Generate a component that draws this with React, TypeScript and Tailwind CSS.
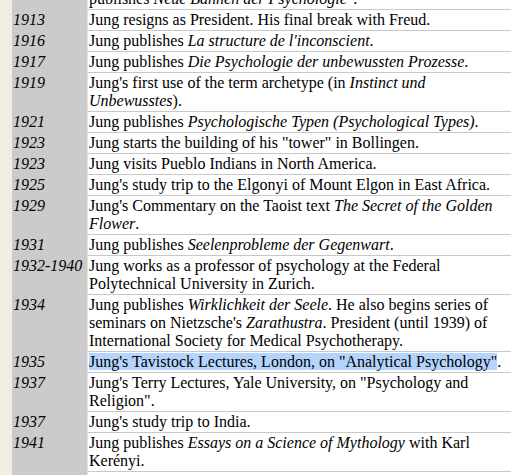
import React from "react";

type Row = { year: string; text: React.ReactNode };

const rows: Row[] = [
  {
    year: "1912",
    text: (
      <>
        Jung publishes <i>Wandlungen und Symbole der Libido</i>. He also
        <br />
        publishes <i>Neue Bahnen der Psychologie</i>".
      </>
    ),
  },
  { year: "1913", text: <>Jung resigns as President. His final break with Freud.</> },
  { year: "1916", text: <>Jung publishes <i>La structure de l'inconscient</i>.</> },
  { year: "1917", text: <>Jung publishes <i>Die Psychologie der unbewussten Prozesse</i>.</> },
  {
    year: "1919",
    text: (
      <>
        Jung's first use of the term archetype (in <i>Instinct und Unbewusstes</i>).
      </>
    ),
  },
  { year: "1921", text: <>Jung publishes <i>Psychologische Typen (Psychological Types)</i>.</> },
  { year: "1923", text: <>Jung starts the building of his "tower" in Bollingen.</> },
  { year: "1923", text: <>Jung visits Pueblo Indians in North America.</> },
  { year: "1925", text: <>Jung's study trip to the Elgonyi of Mount Elgon in East Africa.</> },
  {
    year: "1929",
    text: (
      <>
        Jung's Commentary on the Taoist text <i>The Secret of the Golden Flower</i>.
      </>
    ),
  },
  { year: "1931", text: <>Jung publishes <i>Seelenprobleme der Gegenwart</i>.</> },
  {
    year: "1932-1940",
    text: <>Jung works as a professor of psychology at the Federal Polytechnical University in Zurich.</>,
  },
  {
    year: "1934",
    text: (
      <>
        Jung publishes <i>Wirklichkeit der Seele</i>. He also begins series of seminars on Nietzsche's{" "}
        <i>Zarathustra</i>. President (until 1939) of International Society for Medical Psychotherapy.
      </>
    ),
  },
  {
    year: "1935",
    text: (
      <>
        <span className="bg-[#b4d4fd]">Jung's Tavistock Lectures, London, on "Analytical Psychology"</span>.
      </>
    ),
  },
  { year: "1937", text: <>Jung's Terry Lectures, Yale University, on "Psychology and Religion".</> },
  { year: "1937", text: <>Jung's study trip to India.</> },
  {
    year: "1941",
    text: (
      <>
        Jung publishes <i>Essays on a Science of Mythology</i> with Karl Kerényi.
      </>
    ),
  },
  { year: "1944", text: <>Jung publishes <i>Psychologie und Alchemie</i>.</> },
];

export default function App() {
  return (
    <div
      className="h-[475px] w-[511px] overflow-hidden bg-[#efeee0] pl-[12px] text-[16px] leading-[18px] text-black"
      style={{ fontFamily: '"Liberation Serif", "Times New Roman", serif' }}
    >
      <table className="mt-[-29px] w-[499px] border-separate border-spacing-0">
        <tbody>
          {rows.map((r, i) => (
            <tr key={i}>
              <td className="w-[75px] bg-[#cbcbcb] px-px py-px align-top italic whitespace-nowrap">
                {r.year}
              </td>
              <td className="border-b border-l border-b-[#c8c8c8] border-l-[#e2e2e2] bg-white py-px pl-px pr-0 align-top">
                {r.text}
              </td>
            </tr>
          ))}
        </tbody>
      </table>
    </div>
  );
}
